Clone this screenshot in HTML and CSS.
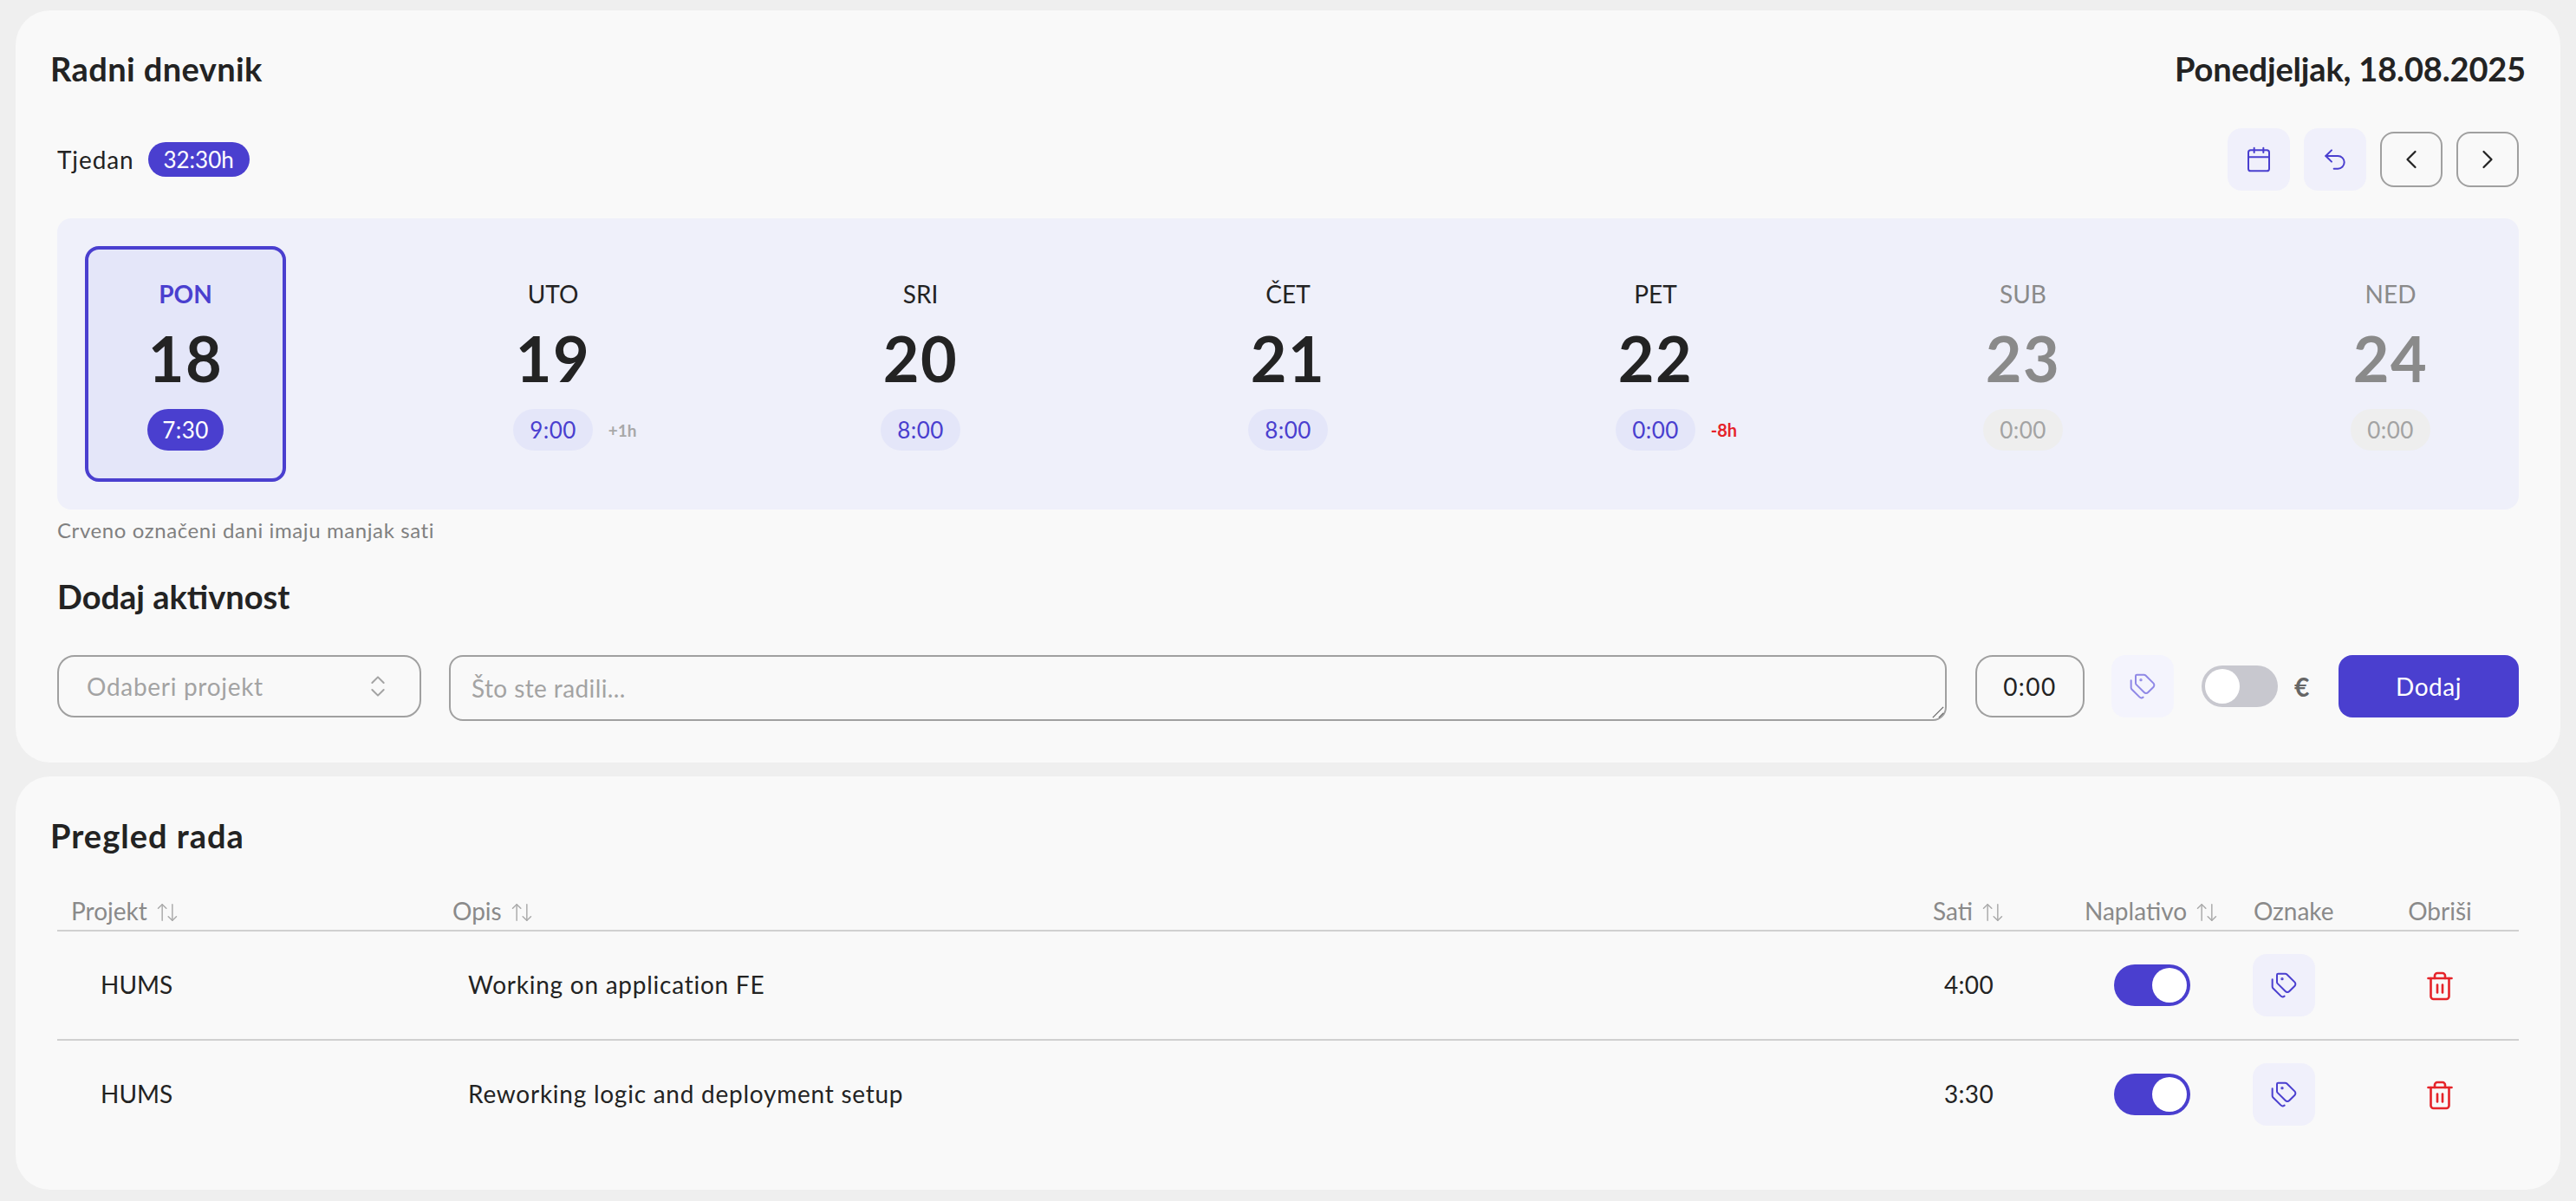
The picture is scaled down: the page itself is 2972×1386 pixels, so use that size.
FILE: index.html
```html
<!DOCTYPE html>
<html lang="hr">
<head>
    <meta charset="UTF-8">
    <title>Radni dnevnik</title>
    <link rel="stylesheet" href="styles.css">
</head>
<body>
    <section class="card card-top">
        <header class="card-header">
            <h1>Radni dnevnik</h1>
            <h2 class="today">Ponedjeljak, 18.08.2025</h2>
        </header>

        <div class="week-bar">
            <div class="week-total">
                <span class="week-label">Tjedan</span>
                <span class="total-pill">32:30h</span>
            </div>
            <div class="week-actions">
                <button class="icon-btn soft">
                    <svg class="ic" viewBox="0 0 24 24"><path d="M8 2v4"/><path d="M16 2v4"/><rect width="18" height="18" x="3" y="4" rx="2"/><path d="M3 10h18"/></svg>
                </button>
                <button class="icon-btn soft">
                    <svg class="ic" viewBox="0 0 24 24"><path d="M9 14 4 9l5-5"/><path d="M4 9h10.5a5.5 5.5 0 0 1 5.5 5.5a5.5 5.5 0 0 1-5.5 5.5H11"/></svg>
                </button>
                <button class="icon-btn outline">
                    <svg class="ic chev" viewBox="0 0 24 24"><path d="m15 18-6-6 6-6"/></svg>
                </button>
                <button class="icon-btn outline">
                    <svg class="ic chev" viewBox="0 0 24 24"><path d="m9 18 6-6-6-6"/></svg>
                </button>
            </div>
        </div>

        <div class="days">
            <div class="day selected">
                <div class="day-name">PON</div>
                <div class="day-num">18</div>
                <div class="day-hours"><span class="hours">7:30</span></div>
            </div>
            <div class="day">
                <div class="day-name">UTO</div>
                <div class="day-num">19</div>
                <div class="day-hours"><span class="hours">9:00</span><span class="diff">+1h</span></div>
            </div>
            <div class="day">
                <div class="day-name">SRI</div>
                <div class="day-num">20</div>
                <div class="day-hours"><span class="hours">8:00</span></div>
            </div>
            <div class="day">
                <div class="day-name">ČET</div>
                <div class="day-num">21</div>
                <div class="day-hours"><span class="hours">8:00</span></div>
            </div>
            <div class="day">
                <div class="day-name">PET</div>
                <div class="day-num">22</div>
                <div class="day-hours"><span class="hours">0:00</span><span class="diff minus">-8h</span></div>
            </div>
            <div class="day weekend">
                <div class="day-name">SUB</div>
                <div class="day-num">23</div>
                <div class="day-hours"><span class="hours">0:00</span></div>
            </div>
            <div class="day weekend">
                <div class="day-name">NED</div>
                <div class="day-num">24</div>
                <div class="day-hours"><span class="hours">0:00</span></div>
            </div>
        </div>
        <p class="note">Crveno označeni dani imaju manjak sati</p>

        <h2 class="add-title">Dodaj aktivnost</h2>
        <div class="add-form">
            <button class="project-select">
                <span>Odaberi projekt</span>
                <svg class="ic updown" viewBox="0 0 24 24"><path d="m7 15 5 5 5-5"/><path d="m7 9 5-5 5 5"/></svg>
            </button>
            <div class="desc-wrap">
                <textarea class="desc" placeholder="Što ste radili..."></textarea>
                <svg class="grip" viewBox="0 0 16 16"><path d="M1 15 15 1"/><path d="M9 15l6-6"/></svg>
            </div>
            <input class="time" type="text" value="0:00">
            <button class="icon-btn soft tag-off">
                <svg class="ic tag" viewBox="0 0 24 24"><path d="M13.172 2a2 2 0 0 1 1.414.586l6.71 6.71a2.4 2.4 0 0 1 0 3.408l-4.592 4.592a2.4 2.4 0 0 1-3.408 0l-6.71-6.71A2 2 0 0 1 6 9.172V3a1 1 0 0 1 1-1z"/><path d="M2 7v6.172a2 2 0 0 0 .586 1.414l6.71 6.71a2.4 2.4 0 0 0 3.164.2"/><circle cx="10.5" cy="6.5" r=".5"/></svg>
            </button>
            <span class="switch"><span class="knob"></span></span>
            <span class="euro">€</span>
            <button class="add-btn">Dodaj</button>
        </div>
    </section>

    <section class="card card-bottom">
        <h1>Pregled rada</h1>
        <table class="work-table">
            <colgroup>
                <col class="c-project"><col class="c-desc"><col class="c-hours"><col class="c-bill"><col class="c-tags"><col class="c-del">
            </colgroup>
            <thead>
                <tr>
                    <th>Projekt <svg class="ic sort" viewBox="0 0 24 24"><path d="m21 16-4 4-4-4"/><path d="M17 20V4"/><path d="m3 8 4-4 4 4"/><path d="M7 4v16"/></svg></th>
                    <th>Opis <svg class="ic sort" viewBox="0 0 24 24"><path d="m21 16-4 4-4-4"/><path d="M17 20V4"/><path d="m3 8 4-4 4 4"/><path d="M7 4v16"/></svg></th>
                    <th>Sati <svg class="ic sort" viewBox="0 0 24 24"><path d="m21 16-4 4-4-4"/><path d="M17 20V4"/><path d="m3 8 4-4 4 4"/><path d="M7 4v16"/></svg></th>
                    <th>Naplativo <svg class="ic sort" viewBox="0 0 24 24"><path d="m21 16-4 4-4-4"/><path d="M17 20V4"/><path d="m3 8 4-4 4 4"/><path d="M7 4v16"/></svg></th>
                    <th>Oznake</th>
                    <th class="center">Obriši</th>
                </tr>
            </thead>
            <tbody>
                <tr>
                    <td class="project">HUMS</td>
                    <td class="text">Working on application FE</td>
                    <td class="sati">4:00</td>
                    <td class="center bill"><span class="switch on"><span class="knob"></span></span></td>
                    <td class="tags"><button class="icon-btn soft"><svg class="ic tag" viewBox="0 0 24 24"><path d="M13.172 2a2 2 0 0 1 1.414.586l6.71 6.71a2.4 2.4 0 0 1 0 3.408l-4.592 4.592a2.4 2.4 0 0 1-3.408 0l-6.71-6.71A2 2 0 0 1 6 9.172V3a1 1 0 0 1 1-1z"/><path d="M2 7v6.172a2 2 0 0 0 .586 1.414l6.71 6.71a2.4 2.4 0 0 0 3.164.2"/><circle cx="10.5" cy="6.5" r=".5"/></svg></button></td>
                    <td class="center"><svg class="ic trash" viewBox="0 0 24 24"><path d="M3 6h18"/><path d="M19 6v14c0 1-1 2-2 2H7c-1 0-2-1-2-2V6"/><path d="M8 6V4c0-1 1-2 2-2h4c1 0 2 1 2 2v2"/><path d="M10 11v6"/><path d="M14 11v6"/></svg></td>
                </tr>
                <tr>
                    <td class="project">HUMS</td>
                    <td class="text">Reworking logic and deployment setup</td>
                    <td class="sati">3:30</td>
                    <td class="center bill"><span class="switch on"><span class="knob"></span></span></td>
                    <td class="tags"><button class="icon-btn soft"><svg class="ic tag" viewBox="0 0 24 24"><path d="M13.172 2a2 2 0 0 1 1.414.586l6.71 6.71a2.4 2.4 0 0 1 0 3.408l-4.592 4.592a2.4 2.4 0 0 1-3.408 0l-6.71-6.71A2 2 0 0 1 6 9.172V3a1 1 0 0 1 1-1z"/><path d="M2 7v6.172a2 2 0 0 0 .586 1.414l6.71 6.71a2.4 2.4 0 0 0 3.164.2"/><circle cx="10.5" cy="6.5" r=".5"/></svg></button></td>
                    <td class="center"><svg class="ic trash" viewBox="0 0 24 24"><path d="M3 6h18"/><path d="M19 6v14c0 1-1 2-2 2H7c-1 0-2-1-2-2V6"/><path d="M8 6V4c0-1 1-2 2-2h4c1 0 2 1 2 2v2"/><path d="M10 11v6"/><path d="M14 11v6"/></svg></td>
                </tr>
            </tbody>
        </table>
    </section>
</body>
</html>
```

FILE: styles.css
```css
* {
    box-sizing: border-box;
    font-family: Lato, "Noto Sans", sans-serif;
}

body {
    margin: 0;
    padding: 12px 18px;
    background-color: #efefef;
    color: #232323;
    font-size: 28px;
    display: flex;
    flex-direction: column;
    gap: 16px;
}

button, input, textarea {
    font-size: 28px;
    color: inherit;
}

.card {
    background-color: #f9f9f9;
    border-radius: 40px;
    padding: 43px 40px 48px;
}

.card-bottom {
    padding-top: 44px;
}

h1, h2 {
    margin: 0;
    font-size: 38px;
    line-height: 48px;
    font-weight: 700;
}

h1 {
    letter-spacing: 0.4px;
}

.card-bottom h1 {
    letter-spacing: 1px;
}

.today {
    letter-spacing: -0.17px;
}

.card-header {
    display: flex;
    justify-content: space-between;
}

.week-bar {
    margin: 45px 8px 0;
    display: flex;
    justify-content: space-between;
    align-items: center;
}

.week-total {
    display: flex;
    align-items: center;
    gap: 16px;
}

.week-label {
    letter-spacing: 0.9px;
}

.total-pill {
    height: 40px;
    width: 117px;
    display: flex;
    align-items: center;
    justify-content: center;
    background-color: #4a3fcf;
    color: #fff;
    font-size: 26px;
    border-radius: 20px;
}

.week-actions {
    display: flex;
    align-items: center;
    gap: 16px;
}

.ic {
    width: 32px;
    height: 32px;
    fill: none;
    stroke: currentColor;
    stroke-width: 1.5;
    stroke-linecap: round;
    stroke-linejoin: round;
}

.icon-btn {
    width: 72px;
    height: 72px;
    padding: 0;
    display: flex;
    align-items: center;
    justify-content: center;
    border: none;
    border-radius: 16px;
    background: none;
}

.soft {
    background-color: #f0f0fb;
    color: #4a3fcf;
}

.outline {
    height: 64px;
    border: 2px solid #a0a0a0;
    border-radius: 16px;
    color: #232323;
}

.chev {
    width: 36px;
    height: 36px;
}

.days {
    margin: 32px 8px 0;
    padding: 32px;
    display: flex;
    justify-content: space-between;
    background-color: #eff0fa;
    border-radius: 16px;
}

.day {
    width: 232px;
    height: 272px;
    padding-top: 31px;
    border: 4px solid transparent;
    border-radius: 16px;
    display: flex;
    flex-direction: column;
    align-items: center;
}

.day.selected {
    background-color: #e4e6f9;
    border-color: #4a3fcf;
}

.day-name {
    line-height: 40px;
}

.selected .day-name {
    color: #4a3fcf;
    font-weight: 700;
}

.day-num {
    margin-top: 14px;
    font-size: 72px;
    line-height: 80px;
    font-weight: 700;
    letter-spacing: 1.5px;
}

.day-hours {
    margin-top: 19px;
    width: 100%;
    display: grid;
    grid-template-columns: 1fr auto 1fr;
    align-items: center;
    column-gap: 18px;
}

.hours {
    grid-column: 2;
    height: 48px;
    padding: 0 19px;
    display: flex;
    align-items: center;
    justify-content: center;
    background-color: #e4e6f9;
    color: #4a3fcf;
    font-size: 26px;
    letter-spacing: 0.4px;
    border-radius: 24px;
}

.selected .hours {
    width: 88px;
    padding: 0;
    background-color: #4a3fcf;
    color: #fff;
}

.diff {
    font-size: 19px;
    font-weight: 700;
    color: #a8a8a8;
}

.diff.minus {
    font-size: 20px;
    color: #e5242a;
}

.weekend .day-name,
.weekend .day-num {
    color: #8a8a8a;
}

.weekend .hours {
    background-color: #eeeeee;
    color: #a3a3a3;
}

.note {
    margin: 8px 8px 0;
    font-size: 24px;
    line-height: 32px;
    letter-spacing: 0.6px;
    color: #808080;
}

.add-title {
    margin: 36px 8px 0;
}

.add-form {
    margin: 44px 8px 0;
    display: flex;
    align-items: flex-start;
}

.project-select {
    width: 420px;
    height: 72px;
    padding: 0 32px;
    display: flex;
    align-items: center;
    justify-content: space-between;
    background: none;
    border: 2px solid #a0a0a0;
    border-radius: 20px;
    color: #a3a3a3;
    letter-spacing: 0.7px;
}

.desc-wrap {
    position: relative;
    flex: 1;
    height: 76px;
    margin: 0 33px 0 32px;
}

.desc {
    display: block;
    width: 100%;
    height: 100%;
    padding: 19px 24px;
    line-height: 34px;
    letter-spacing: 0.4px;
    background: none;
    border: 2px solid #a0a0a0;
    border-radius: 16px;
    outline: none;
    resize: none;
}

.desc::placeholder {
    color: #a3a3a3;
}

.grip {
    position: absolute;
    right: 3px;
    bottom: 3px;
    width: 14px;
    height: 14px;
    fill: none;
    stroke: #666;
    stroke-width: 1.5;
}

.time {
    width: 126px;
    height: 72px;
    padding: 0;
    text-align: center;
    letter-spacing: 1.5px;
    background: none;
    border: 2px solid #a0a0a0;
    border-radius: 20px;
    outline: none;
}

.tag-off {
    margin-left: 31px;
    background-color: #f4f4fd;
    color: #8f88e6;
}

.switch {
    width: 88px;
    height: 48px;
    padding: 4px;
    display: inline-flex;
    vertical-align: middle;
    background-color: #c8c8cf;
    border-radius: 24px;
}

.add-form .switch {
    margin: 12px 0 0 32px;
}

.knob {
    width: 40px;
    height: 40px;
    background-color: #fff;
    border-radius: 50%;
}

.switch.on {
    background-color: #4a3fcf;
    justify-content: flex-end;
}

.euro {
    margin: 16px 31px 0 19px;
    width: 20px;
    line-height: 40px;
    font-size: 30px;
    font-weight: 700;
    color: #666;
}

.add-btn {
    width: 208px;
    height: 72px;
    background-color: #4a3fcf;
    color: #fff;
    letter-spacing: 0.5px;
    border: none;
    border-radius: 16px;
}

.work-table {
    margin: 41px 8px 0;
    width: 2840px;
    table-layout: fixed;
    border-collapse: separate;
    border-spacing: 0;
}

.c-project { width: 440px; }
.c-desc { width: 1708px; }
.c-hours { width: 175px; }
.c-bill { width: 195px; }
.c-tags { width: 140px; }
.c-del { width: 182px; }

th {
    height: 46px;
    padding: 0 0 1px 16px;
    text-align: left;
    font-weight: 400;
    color: #8a8a8a;
    border-bottom: 2px solid #d0d0d0;
}

td {
    height: 126px;
    padding: 0 0 2px 16px;
    border-bottom: 2px solid #d0d0d0;
}

tbody tr:last-child td {
    height: 124px;
    border-bottom: none;
}

th.center, td.center {
    padding-left: 0;
    text-align: center;
}

td.bill {
    padding: 0 8px 0 0;
}

td.tags {
    padding: 0 0 0 15px;
}

td.center {
    padding-bottom: 0;
}

td.project {
    padding-left: 50px;
}

td.text {
    padding-left: 34px;
    letter-spacing: 0.75px;
}

td.sati {
    padding-left: 29px;
    letter-spacing: 0.3px;
}

.sort {
    width: 28px;
    height: 28px;
    margin-left: 2px;
    vertical-align: -5px;
    color: #aaa;
    stroke-width: 1.25;
}

.trash {
    width: 36px;
    height: 36px;
    vertical-align: middle;
    color: #e5242a;
    stroke-width: 1.75;
}
```
